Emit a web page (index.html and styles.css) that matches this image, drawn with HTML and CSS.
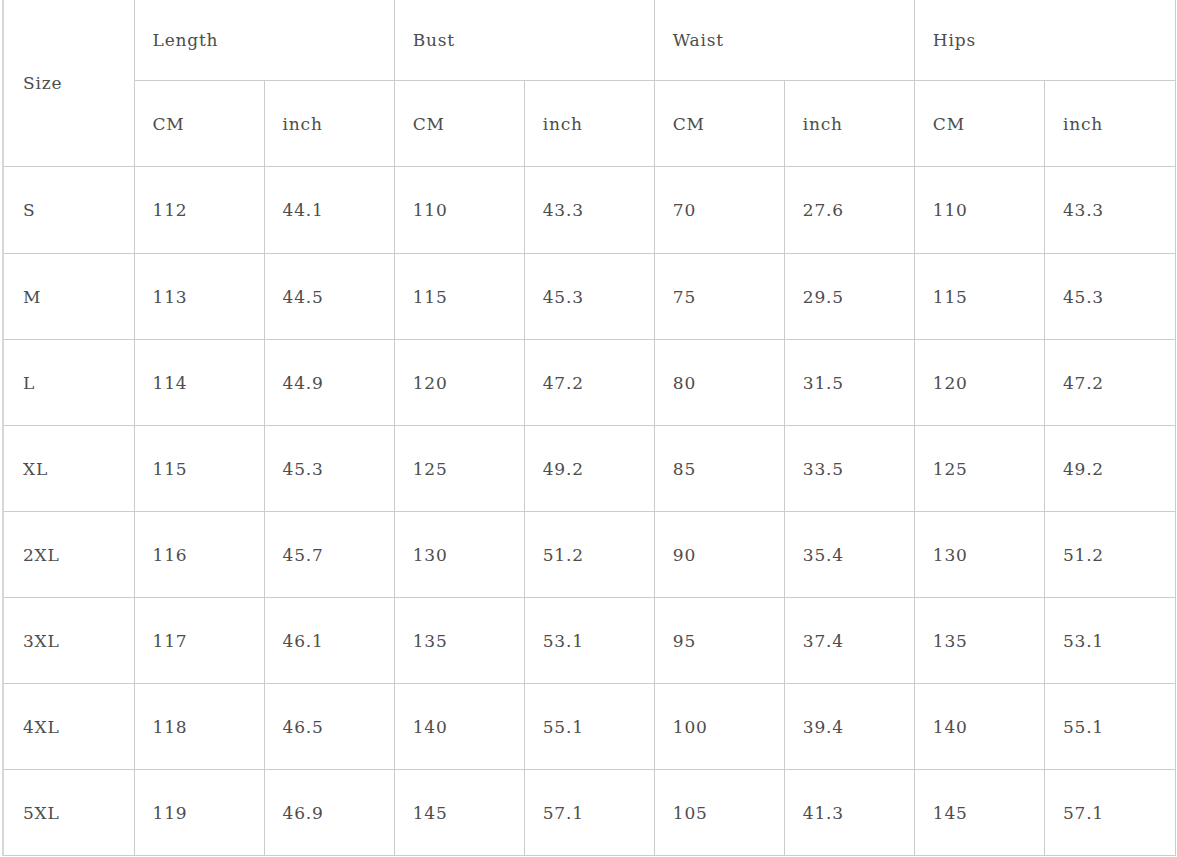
FILE: index.html
```html
<!DOCTYPE html>
<html>
<head>
<meta charset="utf-8">
<link rel="stylesheet" href="styles.css">
</head>
<body>
<table class="size-table">
  <colgroup>
    <col class="c-size">
    <col class="c"><col class="c"><col class="c"><col class="c">
    <col class="c"><col class="c"><col class="c"><col class="c-last">
  </colgroup>
  <thead>
    <tr class="h1">
      <td class="lead" rowspan="2">Size</td>
      <td colspan="2">Length</td>
      <td colspan="2">Bust</td>
      <td colspan="2">Waist</td>
      <td colspan="2">Hips</td>
    </tr>
    <tr class="h2">
      <td>CM</td><td>inch</td><td>CM</td><td>inch</td><td>CM</td><td>inch</td><td>CM</td><td>inch</td>
    </tr>
  </thead>
  <tbody>
    <tr class="first"><td class="lead">S</td><td>112</td><td>44.1</td><td>110</td><td>43.3</td><td>70</td><td>27.6</td><td>110</td><td>43.3</td></tr>
    <tr><td class="lead">M</td><td>113</td><td>44.5</td><td>115</td><td>45.3</td><td>75</td><td>29.5</td><td>115</td><td>45.3</td></tr>
    <tr><td class="lead">L</td><td>114</td><td>44.9</td><td>120</td><td>47.2</td><td>80</td><td>31.5</td><td>120</td><td>47.2</td></tr>
    <tr><td class="lead">XL</td><td>115</td><td>45.3</td><td>125</td><td>49.2</td><td>85</td><td>33.5</td><td>125</td><td>49.2</td></tr>
    <tr><td class="lead">2XL</td><td>116</td><td>45.7</td><td>130</td><td>51.2</td><td>90</td><td>35.4</td><td>130</td><td>51.2</td></tr>
    <tr><td class="lead">3XL</td><td>117</td><td>46.1</td><td>135</td><td>53.1</td><td>95</td><td>37.4</td><td>135</td><td>53.1</td></tr>
    <tr><td class="lead">4XL</td><td>118</td><td>46.5</td><td>140</td><td>55.1</td><td>100</td><td>39.4</td><td>140</td><td>55.1</td></tr>
    <tr><td class="lead">5XL</td><td>119</td><td>46.9</td><td>145</td><td>57.1</td><td>105</td><td>41.3</td><td>145</td><td>57.1</td></tr>
  </tbody>
</table>
</body>
</html>
```
FILE: styles.css
```css
html, body {
  margin: 0;
  padding: 0;
  background: #fff;
}
.size-table {
  margin-left: 2px;
  border-collapse: collapse;
  table-layout: fixed;
  width: 1174px;
  font-family: "DejaVu Serif", "Liberation Serif", serif;
  font-size: 17px;
  letter-spacing: 0.8px;
  color: #4d4d4d;
}
.c-size { width: 131px; }
.c { width: 130px; }
.c-last { width: 131px; }
.size-table td {
  border: 1px solid #ccc;
  padding: 0 0 0 18px;
  height: 85px;
  vertical-align: middle;
  text-align: left;
}
.size-table td.lead {
  border-left: 2px solid #d6d6d6;
  padding-left: 19px;
}
.size-table tr.h1 td {
  border-top: none;
  height: 80px;
}
.size-table tr.first td {
  height: 86px;
}
```
